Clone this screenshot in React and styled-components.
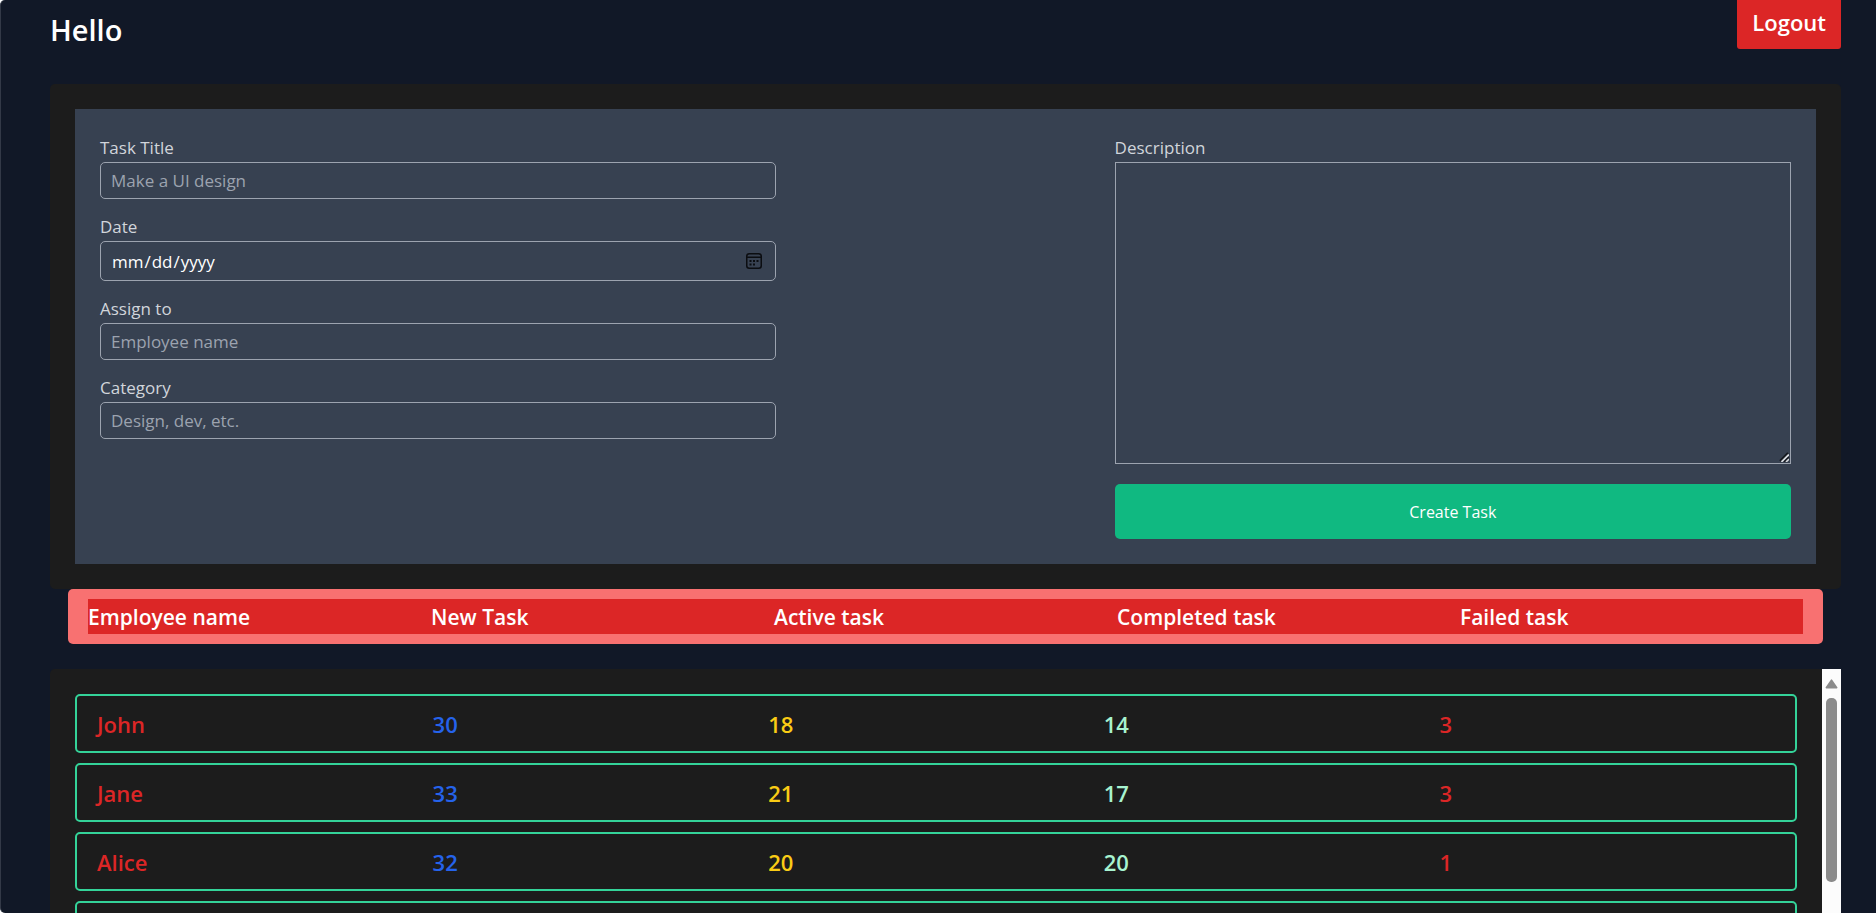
import React from "react";
import styled, { createGlobalStyle } from "styled-components";

const GlobalStyle = createGlobalStyle`
  *, *::before, *::after { box-sizing: border-box; }
  html { background: #ffffff; }
  body {
    margin: 0;
    color: #ffffff;
    font-family: "Segoe UI", "Open Sans", "Noto Sans", sans-serif;
    font-size: 17px;
    line-height: 27px;
  }
  input, textarea, button { font: inherit; color: inherit; margin: 0; }
`;

const Page = styled.div`
  display: flex;
  flex-direction: column;
  height: 100vh;
  padding: 0 35px 0 49px;
  overflow: hidden;
  background: #111827;
  border-left: 1px solid #333947;
  border-radius: 5px 0 0 5px;
`;

const Header = styled.header`
  display: flex;
  flex: none;
  justify-content: space-between;
  align-items: flex-start;
  height: 84px;
`;

const Greeting = styled.h1`
  margin: 0;
  padding-top: 10px;
  font-size: 29px;
  line-height: 40px;
  font-weight: 600;
`;

const LogoutButton = styled.button`
  height: 49px;
  padding: 0 15px 5px;
  border: 0;
  border-radius: 0 0 3px 3px;
  background: #dc2626;
  font-size: 22px;
  font-weight: 600;
`;

const Panel = styled.section`
  flex: none;
  padding: 25px;
  border-radius: 5px;
  background: #1c1c1c;
`;

const TaskForm = styled.form`
  display: flex;
  justify-content: space-between;
  padding: 25px;
  background: #374151;
`;

const Column = styled.div`
  display: flex;
  flex-direction: column;
  width: 40%;
`;

const Label = styled.label`
  margin-bottom: 1px;
  color: #d1d5db;
`;

const Control = styled.div`
  position: relative;
  display: flex;
  margin-bottom: ${(p) => p.$gap}px;
`;

const Input = styled.input`
  width: 100%;
  height: ${(p) => (p.type === "date" ? 40 : 37)}px;
  padding: 0 10px;
  border: 1px solid #9ca3af;
  border-radius: 5px;
  background: transparent;
  outline: none;
  &::placeholder { color: #9ca3af; opacity: 1; }
  &::-webkit-calendar-picker-indicator { opacity: 0; }
`;

const CalendarIcon = styled.svg`
  position: absolute;
  top: 12px;
  right: 14px;
  pointer-events: none;
`;

const TextArea = styled.textarea`
  display: block;
  width: 100%;
  height: 302px;
  padding: 10px;
  border: 1px solid #9ca3af;
  border-radius: 0;
  background: transparent;
  outline: none;
  resize: vertical;
  &::-webkit-resizer { background: transparent; }
`;

const ResizeGrip = styled.svg`
  position: absolute;
  right: 2px;
  bottom: 2px;
  pointer-events: none;
`;

const CreateButton = styled.button`
  height: 55px;
  padding: 2px 0 0;
  border: 0;
  border-radius: 5px;
  background: #10b981;
  font-size: 16px;
`;

const Board = styled.section`
  position: relative;
  display: flex;
  flex: 1;
  min-height: 0;
`;

const Table = styled.table`
  display: flex;
  flex: 1;
  flex-direction: column;
  line-height: 33px;
`;

const TableHead = styled.thead`
  display: block;
  margin: 0 18px 25px;
  padding: 10px 20px;
  border-radius: 5px;
  background: #f87171;
`;

const HeadRow = styled.tr`
  display: flex;
  background: #dc2626;
`;

const HeadCell = styled.th`
  flex: 1 1 0;
  padding: 2px 0 0;
  text-align: left;
  font-size: 21px;
  font-weight: 600;
`;

const TableBody = styled.tbody`
  display: flex;
  flex: 1;
  flex-direction: column;
  gap: 10px;
  min-height: 0;
  padding: 25px 44px 0 25px;
  overflow: hidden;
  border-radius: 5px 0 0 0;
  background: #1c1c1c;
`;

const BodyRow = styled.tr`
  display: flex;
  flex: none;
  height: 59px;
  padding: 10px 20px;
  border: 2px solid #34d399;
  border-radius: 5px;
`;

const BodyCell = styled.td`
  flex: 1 1 0;
  padding: 2px 0 0;
  color: ${(p) => p.$color};
  font-size: 22px;
  font-weight: 600;
`;

const ScrollTrack = styled.div`
  position: absolute;
  top: 80px;
  right: 0;
  bottom: 0;
  display: flex;
  flex-direction: column;
  align-items: center;
  gap: 9px;
  width: 19px;
  padding-top: 10px;
  background: #fcfcfc;
`;

const ScrollThumb = styled.div`
  width: 11px;
  height: 184px;
  border-radius: 5px;
  background: #8b8b8b;
`;

const columns = ["Employee name", "New Task", "Active task", "Completed task", "Failed task"];
const colors = ["#dc2626", "#2563eb", "#facc15", "#a7f3d0", "#dc2626"];
const employees = [
  ["John", 30, 18, 14, 3],
  ["Jane", 33, 21, 17, 3],
  ["Alice", 32, 20, 20, 1],
  ["", "", "", "", ""],
];

export default function App() {
  return (
    <>
      <GlobalStyle />
      <Page>
        <Header>
          <Greeting>Hello</Greeting>
          <LogoutButton type="button">Logout</LogoutButton>
        </Header>
        <Panel>
          <TaskForm onSubmit={(e) => e.preventDefault()}>
            <Column>
              <Label htmlFor="title">Task Title</Label>
              <Control $gap={14}>
                <Input id="title" type="text" placeholder="Make a UI design" />
              </Control>
              <Label htmlFor="date">Date</Label>
              <Control $gap={14}>
                <Input id="date" type="date" />
                <CalendarIcon width="16" height="16" viewBox="0 0 16 16" aria-hidden="true">
                  <rect x="0.75" y="0.75" width="14.5" height="14.5" rx="2.5" fill="none" stroke="#0b0d11" strokeWidth="1.5" />
                  <path d="M1 4.25H15" stroke="#0b0d11" strokeWidth="1.5" />
                  <path d="M3.5 7h2v2h-2zM7 7h2v2h-2zM10.5 7h2v2h-2zM3.5 10.5h2v2h-2zM7 10.5h2v2h-2z" fill="#0b0d11" />
                </CalendarIcon>
              </Control>
              <Label htmlFor="assignee">Assign to</Label>
              <Control $gap={14}>
                <Input id="assignee" type="text" placeholder="Employee name" />
              </Control>
              <Label htmlFor="category">Category</Label>
              <Control $gap={14}>
                <Input id="category" type="text" placeholder="Design, dev, etc." />
              </Control>
            </Column>
            <Column>
              <Label htmlFor="description">Description</Label>
              <Control $gap={20}>
                <TextArea id="description" />
                <ResizeGrip width="10" height="10" viewBox="0 0 10 10" aria-hidden="true">
                  <path d="M1 9L9 1" stroke="#15181e" strokeWidth="2" />
                  <path d="M2.5 10L10 2.5" stroke="#d6d9de" strokeWidth="1.8" />
                  <path d="M5 10L10 5" stroke="#15181e" strokeWidth="1.6" />
                  <path d="M7 10L10 7" stroke="#d6d9de" strokeWidth="1.6" />
                </ResizeGrip>
              </Control>
              <CreateButton type="submit">Create Task</CreateButton>
            </Column>
          </TaskForm>
        </Panel>
        <Board>
          <Table>
            <TableHead>
              <HeadRow>
                {columns.map((name) => (
                  <HeadCell key={name} scope="col">{name}</HeadCell>
                ))}
              </HeadRow>
            </TableHead>
            <TableBody>
              {employees.map((row, r) => (
                <BodyRow key={r}>
                  {row.map((value, c) => (
                    <BodyCell key={c} $color={colors[c]}>{value}</BodyCell>
                  ))}
                </BodyRow>
              ))}
            </TableBody>
          </Table>
          <ScrollTrack aria-hidden="true">
            <svg width="13" height="10" viewBox="0 0 13 10">
              <path d="M6.5 1.2 L11.7 8.6 H1.3 Z" fill="#8b8b8b" stroke="#8b8b8b" strokeWidth="1.6" strokeLinejoin="round" />
            </svg>
            <ScrollThumb />
          </ScrollTrack>
        </Board>
      </Page>
    </>
  );
}
